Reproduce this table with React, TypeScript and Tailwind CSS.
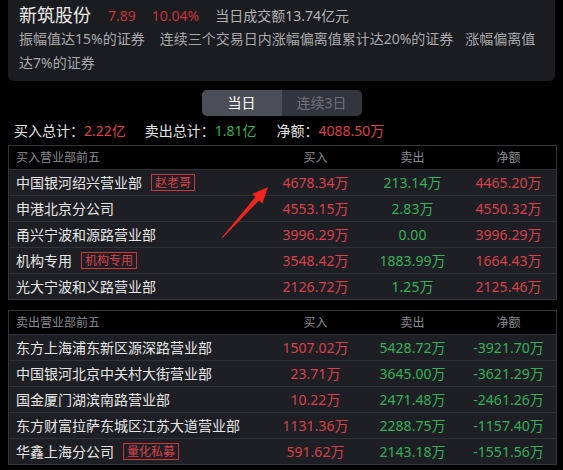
import React from 'react';

type Row = {
  name: string;
  tag?: string;
  buy: string;
  sell: string;
  net: string;
};

const buyRows: Row[] = [
  { name: '中国银河绍兴营业部', tag: '赵老哥', buy: '4678.34万', sell: '213.14万', net: '4465.20万' },
  { name: '申港北京分公司', buy: '4553.15万', sell: '2.83万', net: '4550.32万' },
  { name: '甬兴宁波和源路营业部', buy: '3996.29万', sell: '0.00', net: '3996.29万' },
  { name: '机构专用', tag: '机构专用', buy: '3548.42万', sell: '1883.99万', net: '1664.43万' },
  { name: '光大宁波和义路营业部', buy: '2126.72万', sell: '1.25万', net: '2125.46万' },
];

const sellRows: Row[] = [
  { name: '东方上海浦东新区源深路营业部', buy: '1507.02万', sell: '5428.72万', net: '-3921.70万' },
  { name: '中国银河北京中关村大街营业部', buy: '23.71万', sell: '3645.00万', net: '-3621.29万' },
  { name: '国金厦门湖滨南路营业部', buy: '10.22万', sell: '2471.48万', net: '-2461.26万' },
  { name: '东方财富拉萨东城区江苏大道营业部', buy: '1131.36万', sell: '2288.75万', net: '-1157.40万' },
  { name: '华鑫上海分公司', tag: '量化私募', buy: '591.62万', sell: '2143.18万', net: '-1551.56万' },
];

const RED = 'text-[#d9414a]';
const GREEN = 'text-[#35b058]';

function SeatTable({ title, rows }: { title: string; rows: Row[] }) {
  return (
    <div className="ml-2 w-[549px] border border-[#36373c]">
      {/* Header */}
      <div className="grid h-[23px] grid-cols-[1fr_97px_97px_95px] items-center bg-black text-[12px] leading-[23px] text-[#8a8b90]">
        <span className="pl-[7px]">{title}</span>
        <span className="text-center">买入</span>
        <span className="text-center">卖出</span>
        <span className="text-center">净额</span>
      </div>
      {rows.map((r) => (
        <div
          key={r.name}
          className="grid h-[26px] grid-cols-[1fr_97px_97px_95px] items-center border-t border-[#303136] bg-[#1e1f24] text-[14px] leading-[25px]"
        >
          <div className="flex items-center pl-[7px] text-[#e6e6e6]">
            <span>{r.name}</span>
            {r.tag && (
              <span className="ml-[9px] h-[17px] border border-[#c93a3e] px-[3px] text-[12px] leading-[15px] text-[#d9414a]">
                {r.tag}
              </span>
            )}
          </div>
          <span className={`text-center ${RED}`}>{r.buy}</span>
          <span className={`text-center ${GREEN}`}>{r.sell}</span>
          <span className={`text-center ${r.net.startsWith('-') ? GREEN : RED}`}>{r.net}</span>
        </div>
      ))}
    </div>
  );
}

export default function App() {
  return (
    <div
      className="relative h-[470px] w-[563px] overflow-hidden bg-black"
      style={{ fontFamily: '"Noto Sans", "Noto Sans CJK SC", sans-serif' }}
    >
      {/* Stock summary card */}
      <div className="mx-2 rounded-b-[6px] bg-[#1b1c20] px-[11px] pb-[6px] pt-[4px]">
        <div className="flex h-[23px] items-center">
          <span className="text-[18px] leading-[23px] text-[#ececec]">新筑股份</span>
          <span className="ml-[17px] text-[14px] text-[#c8343a]">7.89</span>
          <span className="ml-[16px] text-[14px] text-[#c8343a]">10.04%</span>
          <span className="ml-[16px] text-[14px] text-[#b3b4b8]">当日成交额13.74亿元</span>
        </div>
        <div className="text-[14px] leading-[24px] text-[#a8a9ad]">
          <div className="flex whitespace-nowrap">
            <span className="mr-[15px]">振幅值达15%的证券</span>
            <span className="mr-[12px]">连续三个交易日内涨幅偏离值累计达20%的证券</span>
            <span>涨幅偏离值</span>
          </div>
          <div>达7%的证券</div>
        </div>
      </div>

      {/* Period tabs */}
      <div className="mx-auto mt-[9px] flex h-[26px] w-[160px] overflow-hidden rounded-[5px] text-[14px] leading-[26px]">
        <div className="flex-1 bg-[#4b4d57] text-center text-white">当日</div>
        <div className="flex-1 bg-[#33353e] text-center text-[#6f717a]">连续3日</div>
      </div>

      {/* Totals */}
      <div className="mt-[5px] flex pl-[14px] text-[14px] leading-[20px] text-[#e6e6e6]">
        <span>买入总计：</span>
        <span className={RED}>2.22亿</span>
        <span className="ml-[19px]">卖出总计：</span>
        <span className={GREEN}>1.81亿</span>
        <span className="ml-[20px]">净额：</span>
        <span className={RED}>4088.50万</span>
      </div>

      <div className="mt-[4px]">
        <SeatTable title="买入营业部前五" rows={buyRows} />
      </div>
      <div className="mt-[10px]">
        <SeatTable title="卖出营业部前五" rows={sellRows} />
      </div>

      {/* Annotation arrow */}
      <svg className="pointer-events-none absolute left-0 top-0" width="563" height="470">
        <polygon
          points="222.4,238.3 259,200.5 262.4,203.5 268,187 252,194.1 255.4,197.1 221.6,237.7"
          fill="#f0261e"
        />
      </svg>
    </div>
  );
}
